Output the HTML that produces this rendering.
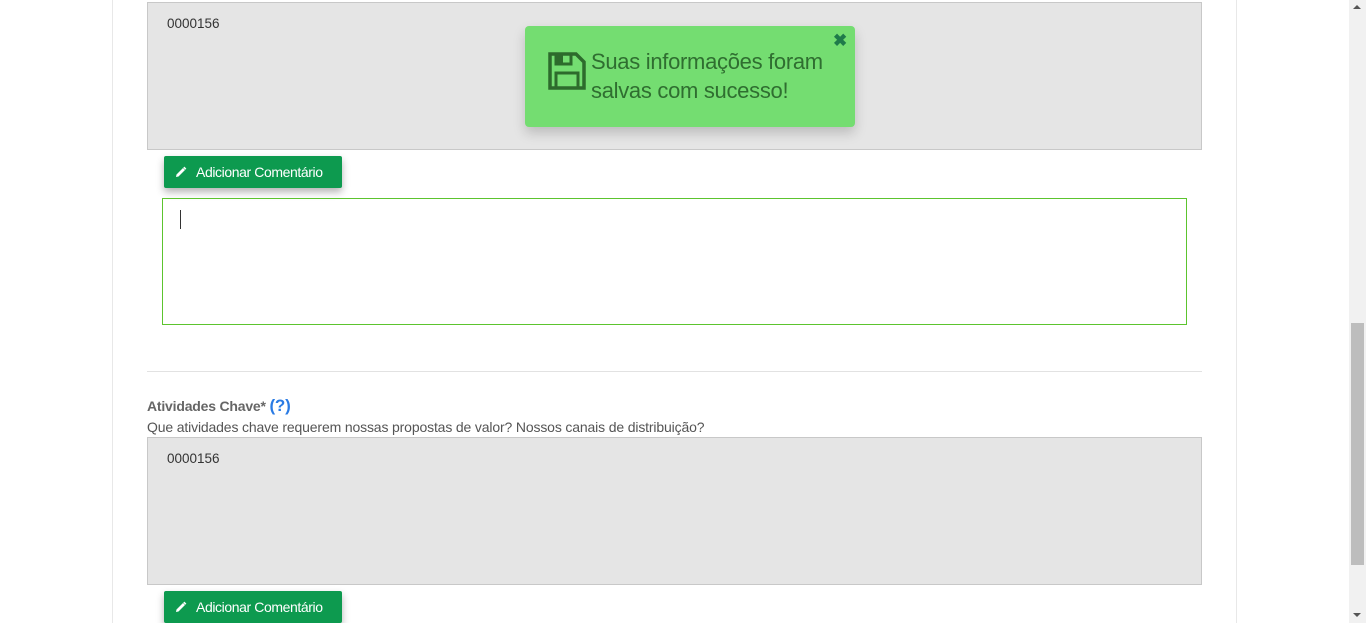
<!DOCTYPE html>
<html><head><meta charset="utf-8"><style>
*{box-sizing:border-box;margin:0;padding:0}
body{width:1366px;height:623px;overflow:hidden;background:#fff;font-family:"Liberation Sans",sans-serif;position:relative}
.abs{position:absolute}
.vl{position:absolute;top:0;height:623px;width:1px;background:#e8e8e8}
.box{position:absolute;left:147px;width:1055px;background:#e5e5e5;border:1px solid #c8c8c8}
.box span{position:absolute;left:19px;top:13px;font-size:13.5px;color:#333}
.btn{position:absolute;left:164px;width:178px;height:32px;background:#0d9a4f;border-radius:2px;color:#fff;font-size:14px;letter-spacing:-0.4px;box-shadow:0 4px 8px rgba(0,0,0,.3);line-height:32px;padding-left:32px}
.btn svg{position:absolute;left:10px;top:10px}
</style></head><body>
<div class="vl" style="left:112px"></div>
<div class="vl" style="left:1236px"></div>
<div class="box" style="top:2px;height:148px"><span>0000156</span></div>
<div class="btn" style="top:156px"><svg width="13" height="13" viewBox="0 0 13 13"><path d="M2 11 L2.5 8.5 L9 2 L11 4 L4.5 10.5 Z" fill="#fff"/><path d="M9.8 1.2 L11.8 3.2" stroke="#fff" stroke-width="1.5"/></svg>Adicionar Comentário</div>
<div class="abs" style="left:162px;top:198px;width:1025px;height:127px;border:1px solid #5cc42e"></div>
<div class="abs" style="left:180px;top:210px;width:1px;height:19px;background:#333"></div>
<div class="abs" style="left:147px;top:371px;width:1055px;height:1px;background:#e2e2e2"></div>
<div class="abs" style="left:147px;top:396px;font-size:14px;font-weight:bold;color:#666;letter-spacing:-0.2px">Atividades Chave* <span style="color:#2a7be4;font-size:17px;font-weight:bold">(?)</span></div>
<div class="abs" style="left:147px;top:419px;font-size:14px;color:#555;letter-spacing:-0.15px">Que atividades chave requerem nossas propostas de valor? Nossos canais de distribuição?</div>
<div class="box" style="top:437px;height:148px"><span>0000156</span></div>
<div class="btn" style="top:591px"><svg width="13" height="13" viewBox="0 0 13 13"><path d="M2 11 L2.5 8.5 L9 2 L11 4 L4.5 10.5 Z" fill="#fff"/><path d="M9.8 1.2 L11.8 3.2" stroke="#fff" stroke-width="1.5"/></svg>Adicionar Comentário</div>
<div class="abs" style="left:525px;top:26px;width:330px;height:101px;background:#74dd71;border-radius:4px;box-shadow:0 6px 12px rgba(0,0,0,.18)">
<svg class="abs" style="left:22px;top:25px" width="40" height="40" viewBox="0 0 40 40"><path d="M3 3 H29 L37 11 V37 H3 Z" fill="none" stroke="#2d6b2c" stroke-width="3.5"/><rect x="9" y="3" width="15" height="10" fill="none" stroke="#2d6b2c" stroke-width="3"/><rect x="9" y="3" width="7" height="10" fill="#2d6b2c"/><rect x="9" y="22" width="22" height="15" fill="none" stroke="#2d6b2c" stroke-width="3"/></svg>
<div class="abs" style="left:66px;top:21px;font-size:22px;line-height:29px;color:#2f6e30;letter-spacing:-0.3px">Suas informações foram<br>salvas com sucesso!</div>
<div class="abs" style="left:308px;top:5px;font-size:17px;font-weight:bold;color:#1f7a4a">✖</div>
</div>
<div class="abs" style="left:1349px;top:0;width:17px;height:623px;background:#f1f1f1"></div>
<div class="abs" style="left:1351px;top:323px;width:13px;height:242px;background:#bdbdbd"></div>
<div class="abs" style="left:1353px;top:5px;width:0;height:0;border-left:4px solid transparent;border-right:4px solid transparent;border-bottom:4px solid #555"></div>
<div class="abs" style="left:1353px;top:613px;width:0;height:0;border-left:4px solid transparent;border-right:4px solid transparent;border-top:4px solid #555"></div>
</body></html>
